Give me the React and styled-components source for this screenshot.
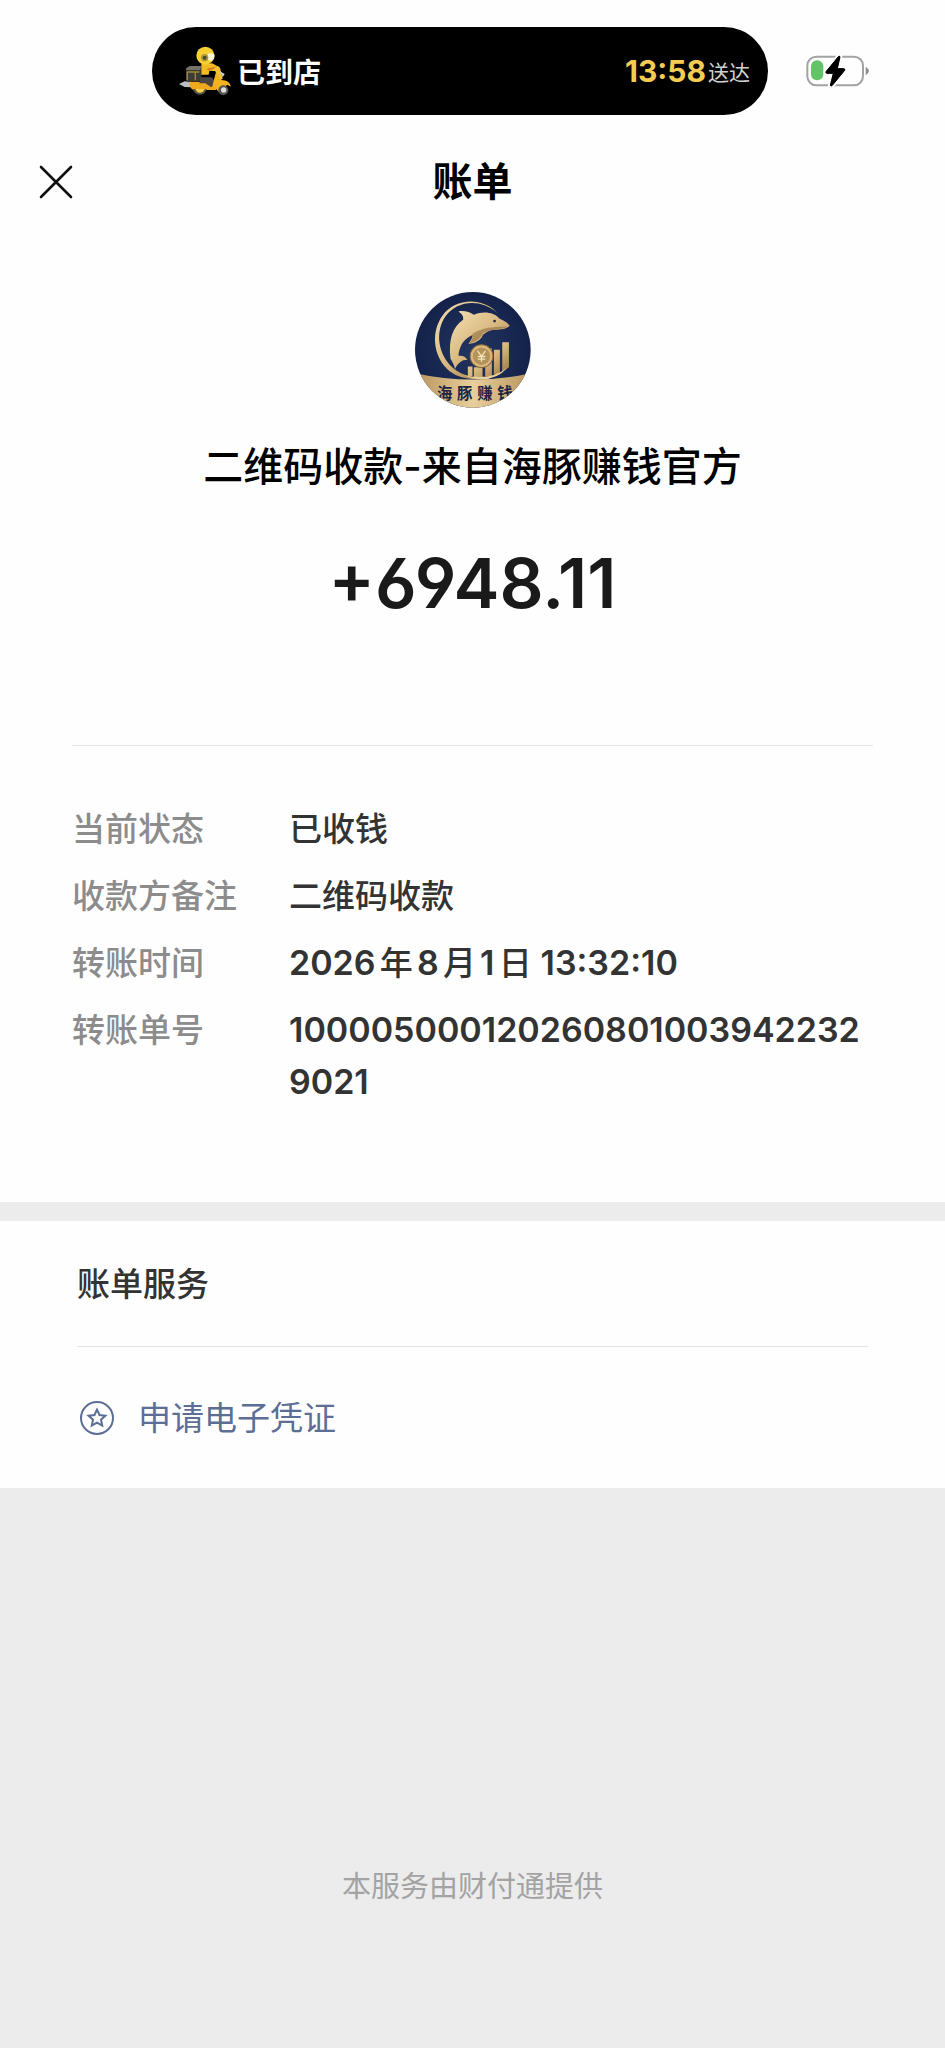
import React from "react";
import styled, { createGlobalStyle } from "styled-components";

const details = [
  { label: "当前状态", value: "已收钱" },
  { label: "收款方备注", value: "二维码收款" },
  { label: "转账时间", value: "2026年8月1日 13:32:10" },
  { label: "转账单号", value: "1000050001202608010039422329021" },
];

// digits are set heavier than the characters around them
function withDigits(text) {
  return text
    .split(/([\d:]+)/)
    .filter(Boolean)
    .map((part, i) => (/\d/.test(part) ? <Digits key={i}>{part}</Digits> : part));
}

export default function App() {
  return (
    <Page>
      <GlobalStyle />
      <White>
        <StatusBar />
        <NavBar>
          <CloseButton type="button" aria-label="关闭">
            <svg width="36" height="36" viewBox="0 0 36 36">
              <path
                d="M3 3L33 33M33 3L3 33"
                stroke="#111"
                strokeWidth="2.6"
                strokeLinecap="round"
              />
            </svg>
          </CloseButton>
          <Title>账单</Title>
        </NavBar>
        <Summary>
          <Avatar />
          <Payee>二维码收款-来自海豚赚钱官方</Payee>
          <Amount>+6948.11</Amount>
        </Summary>
        <Details>
          {details.map((item) => (
            <Row key={item.label}>
              <Label>{item.label}</Label>
              <Value>{withDigits(item.value)}</Value>
            </Row>
          ))}
        </Details>
      </White>
      <Band />
      <White>
        <Services>
          <ServiceTitle>账单服务</ServiceTitle>
          <ServiceLink href="#voucher">
            <StarIcon />
            申请电子凭证
          </ServiceLink>
        </Services>
      </White>
      <Footer>本服务由财付通提供</Footer>
    </Page>
  );
}

function StatusBar() {
  return (
    <Status>
      <Island>
        <Scooter />
        <IslandText>已到店</IslandText>
        <IslandTime>13:58</IslandTime>
        <IslandNote>送达</IslandNote>
      </Island>
      <Battery />
    </Status>
  );
}

function Scooter() {
  return (
    <svg width="52" height="50" viewBox="117 74 156 150" aria-hidden="true">
      <path d="M117 188L134 180L156 182V198L134 197Z" fill="#b9bdc4" />
      <path d="M148 181H200L232 190L228 206H160Q148 200 148 181Z" fill="#f0a91c" />
      <path d="M158 203H200Q196 220 180 220Q164 220 158 203Z" fill="#5b554b" />
      <path d="M166 203H194Q190 214 180 214Q170 214 166 203Z" fill="#f7d04a" />
      <path d="M138 141L150 134H184V178L142 181L138 176Z" fill="#3f3c36" />
      <path d="M138 141L150 134H184L180 146H140Z" fill="#77736b" />
      <path d="M142 152H178M142 152V177M166 150V177" stroke="#a08b26" strokeWidth="4" />
      <path d="M182 168H216L226 182L214 198L196 186H178Z" fill="#4a4742" />
      <path d="M184 128L216 126L236 136L232 150L208 148L206 160H184Z" fill="#f3bb22" />
      <path d="M204 144L230 138" stroke="#d07a1c" strokeWidth="5" strokeLinecap="round" />
      <path d="M222 140Q240 128 242 148L248 172L238 178Z" fill="#f5c136" />
      <path d="M228 152L244 176Q270 176 272 196L262 190L236 212L218 190Z" fill="#f3b321" />
      <path d="M240 150L254 158L248 168Z" fill="#cfd3d8" />
      <circle cx="250" cy="207" r="15" fill="#57544e" />
      <circle cx="251" cy="206" r="8" fill="#d9dce0" />
      <circle cx="196" cy="103" r="27" fill="#f6cf32" />
      <path d="M204 97Q214 93 223 99Q226 112 216 118Q204 120 200 110Z" fill="#fdf4d4" />
      <circle cx="194" cy="109" r="11" fill="#ad9a3a" />
      <circle cx="194" cy="109" r="6" fill="#4c4a2c" />
    </svg>
  );
}

function Battery() {
  return (
    <svg width="64" height="32" viewBox="675 102 192 96" role="img" aria-label="充电中">
      <rect x="679" y="107" width="167" height="86" rx="27" fill="none" stroke="#a3a3a5" strokeWidth="6" />
      <path d="M854 137Q864 144 864 150Q864 156 854 163Z" fill="#8e8e90" />
      <rect x="690" y="118" width="37" height="60" rx="18" fill="#62c466" />
      <path
        d="M773 106L735 152Q733 157 738 157H757L748 193Q750 197 754 193L791 148Q793 143 788 143H769L777 108Q776 104 773 106Z"
        fill="#000"
        stroke="#fff"
        strokeWidth="14"
        paintOrder="stroke"
      />
      <path
        d="M773 106L735 152Q733 157 738 157H757L748 193Q750 197 754 193L791 148Q793 143 788 143H769L777 108Q776 104 773 106Z"
        stroke="#000"
        strokeWidth="3"
      />
    </svg>
  );
}

function Avatar() {
  return (
    <svg width="116" height="116" viewBox="44 37 347 347" role="img" aria-label="海豚赚钱">
      <defs>
        <clipPath id="round">
          <circle cx="217" cy="210" r="173" />
        </clipPath>
        <linearGradient id="gold" x1="0" y1="0" x2="1" y2="1">
          <stop offset="0" stopColor="#f3dfb2" />
          <stop offset="0.5" stopColor="#d8b880" />
          <stop offset="1" stopColor="#94703c" />
        </linearGradient>
        <linearGradient id="banner" x1="0" y1="0" x2="1" y2="0">
          <stop offset="0" stopColor="#b8945c" />
          <stop offset="0.5" stopColor="#e8cf9c" />
          <stop offset="1" stopColor="#b8945c" />
        </linearGradient>
        <radialGradient id="navy">
          <stop offset="0" stopColor="#223560" />
          <stop offset="1" stopColor="#14224a" />
        </radialGradient>
      </defs>
      <g clipPath="url(#round)">
        <rect x="44" y="37" width="347" height="347" fill="url(#navy)" />
        <path
          d="M292 101C246 51 164 55 126 108C86 164 102 246 158 281C184 297 220 300 246 296C204 291 174 281 152 259C112 219 104 153 136 109C170 63 240 55 292 101Z"
          fill="url(#gold)"
        />
        <path
          d="M202 260H216V288H202ZM220 262H246V292H220ZM254 206H274V290H254ZM280 210H298V284H280ZM305 187H325V262L305 275Z"
          fill="url(#gold)"
        />
        <path d="M190 286Q270 304 322 262Q282 308 216 296Z" fill="#e8cf9c" />
        <path
          d="M174 95C192 92 208 97 220 105C248 93 280 97 296 116C308 122 322 128 327 138C318 148 300 150 286 150C270 150 260 155 248 164C242 178 228 191 204 192C212 182 216 174 216 166C188 178 176 202 174 228C186 226 196 231 201 240C184 240 172 250 164 267C160 252 154 244 150 236C144 180 156 142 188 120C190 110 184 102 174 95Z"
          fill="url(#gold)"
        />
        <path d="M216 162C240 148 262 140 322 141C300 150 270 147 248 160C240 176 226 188 206 191C214 182 218 174 216 162Z" fill="#8d6e40" opacity="0.6" />
        <circle cx="282" cy="124" r="4" fill="#1a2748" />
        <circle cx="243" cy="229" r="34" fill="#d9b97c" stroke="#8a6a38" strokeWidth="3" />
        <circle cx="243" cy="229" r="26" fill="#b4935a" />
        <path d="M231 213L243 229L255 213M243 229V246M232 230H254M232 238H254" fill="none" stroke="#f4e2b8" strokeWidth="4" />
        <path d="M44 280Q217 318 391 280V384H44Z" fill="url(#banner)" />
        <AvatarText x="110 170 230 290" y="358">
          海豚赚钱
        </AvatarText>
      </g>
    </svg>
  );
}

function StarIcon() {
  return (
    <svg width="34" height="34" viewBox="0 0 34 34" fill="none" stroke="#5c6d96" aria-hidden="true">
      <circle cx="17" cy="17" r="16" strokeWidth="2" />
      <path
        d="M17 8.6L19.5 14L25.4 14.7L21 18.7L22.2 24.5L17 21.6L11.8 24.5L13 18.7L8.6 14.7L14.5 14Z"
        strokeWidth="2"
      />
    </svg>
  );
}

const GlobalStyle = createGlobalStyle`
  * {
    box-sizing: border-box;
  }
  body {
    margin: 0;
    background: #ececec;
    font-family: Inter, "Noto Sans CJK SC", sans-serif;
  }
  h1, h2, p, dl, dd, dt {
    margin: 0;
  }
`;
const Page = styled.div`
  min-height: 100vh;
  background: #ececec;
`;
const White = styled.section`
  background: #fefefe;
`;
const Status = styled.header`
  display: flex;
  align-items: center;
  gap: 38px;
  padding: 27px 75px 25px 152px;
`;
const Island = styled.div`
  flex: 1;
  display: flex;
  align-items: center;
  height: 88px;
  padding: 0 18px 0 27px;
  border-radius: 44px;
  background: #000;
  color: #fff;
`;
const IslandText = styled.span`
  flex: 1;
  margin-left: 6px;
  font-size: 28px;
  font-weight: 700;
`;
const IslandTime = styled.span`
  font-size: 30px;
  font-weight: 700;
  color: #f5cc53;
`;
const IslandNote = styled.span`
  margin-left: 2px;
  font-size: 21px;
  color: #d0d0d0;
`;
const NavBar = styled.nav`
  display: grid;
  grid-template-columns: 1fr auto 1fr;
  align-items: center;
  height: 84px;
  padding: 0 38px;
`;
const CloseButton = styled.button`
  display: flex;
  justify-self: start;
  padding: 0;
  border: none;
  background: none;
`;
const Title = styled.h1`
  font-size: 40px;
  font-weight: 700;
  line-height: 52px;
  color: #000;
`;
const Summary = styled.div`
  display: flex;
  flex-direction: column;
  align-items: center;
  margin: 0 72px;
  padding: 68px 0 122px;
  border-bottom: 1px solid #e4e4e4;
`;
const Payee = styled.h2`
  margin-top: 33px;
  font-size: 40px;
  font-weight: 500;
  line-height: 52px;
  color: #000;
`;
const Amount = styled.p`
  margin-top: 50px;
  font-size: 69px;
  font-weight: 600;
  font-feature-settings: "cv03", "cv04";
  line-height: 80px;
  color: #1a1a1a;
`;
const Details = styled.dl`
  display: flex;
  flex-direction: column;
  gap: 15px;
  padding: 57px 72px 94px;
`;
const Row = styled.div`
  display: grid;
  grid-template-columns: 217px 1fr;
  font-size: 33px;
  line-height: 52px;
`;
const Label = styled.dt`
  font-weight: 500;
  color: #8c8c8c;
`;
const Value = styled.dd`
  font-weight: 500;
  color: #333;
  word-break: break-all;
  text-autospace: normal;
`;
const Digits = styled.span`
  font-size: 34px;
  font-weight: 600;
`;
const Band = styled.div`
  height: 19px;
`;
const Services = styled.div`
  padding: 0 77px;
`;
const ServiceTitle = styled.h2`
  padding: 37px 0 36px;
  border-bottom: 1px solid #e4e4e4;
  font-size: 33px;
  font-weight: 500;
  line-height: 52px;
  color: #333;
`;
const ServiceLink = styled.a`
  display: flex;
  align-items: center;
  gap: 24px;
  padding: 45px 3px 44px;
  font-size: 33px;
  line-height: 52px;
  color: #5c6d96;
  text-decoration: none;
`;
const Footer = styled.footer`
  padding: 379px 0 141px;
  font-size: 29px;
  line-height: 40px;
  text-align: center;
  color: #a3a3a3;
`;
const AvatarText = styled.text`
  font-size: 46px;
  font-weight: 700;
  fill: #1c2444;
`;
